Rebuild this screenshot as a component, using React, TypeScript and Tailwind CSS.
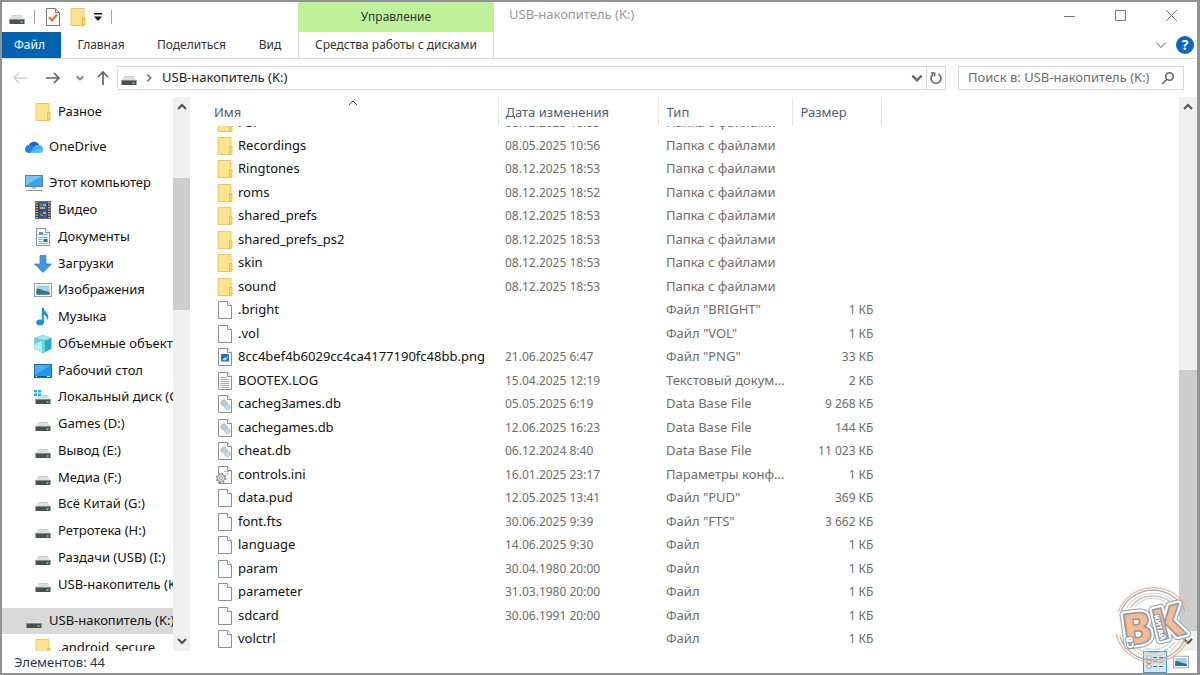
import type { ReactNode } from 'react'

type IconName =
  | 'folder' | 'file' | 'png' | 'log' | 'db' | 'ini'
  | 'onedrive' | 'pc' | 'video' | 'docs' | 'downloads' | 'pictures'
  | 'music' | 'objects' | 'desktop' | 'system' | 'drive'

type FileRow = {
  name: string
  icon: IconName
  date?: string
  type: string
  size?: string
}

type TreeItem = {
  name: string
  icon: IconName
}

const DIR = 'Папка с файлами'

const files: FileRow[] = [
  { name: 'Recordings', icon: 'folder', date: '08.05.2025 10:56', type: DIR },
  { name: 'Ringtones', icon: 'folder', date: '08.12.2025 18:53', type: DIR },
  { name: 'roms', icon: 'folder', date: '08.12.2025 18:52', type: DIR },
  { name: 'shared_prefs', icon: 'folder', date: '08.12.2025 18:53', type: DIR },
  { name: 'shared_prefs_ps2', icon: 'folder', date: '08.12.2025 18:53', type: DIR },
  { name: 'skin', icon: 'folder', date: '08.12.2025 18:53', type: DIR },
  { name: 'sound', icon: 'folder', date: '08.12.2025 18:53', type: DIR },
  { name: '.bright', icon: 'file', type: 'Файл "BRIGHT"', size: '1 КБ' },
  { name: '.vol', icon: 'file', type: 'Файл "VOL"', size: '1 КБ' },
  { name: '8cc4bef4b6029cc4ca4177190fc48bb.png', icon: 'png', date: '21.06.2025 6:47', type: 'Файл "PNG"', size: '33 КБ' },
  { name: 'BOOTEX.LOG', icon: 'log', date: '15.04.2025 12:19', type: 'Текстовый докум...', size: '2 КБ' },
  { name: 'cacheg3ames.db', icon: 'db', date: '05.05.2025 6:19', type: 'Data Base File', size: '9 268 КБ' },
  { name: 'cachegames.db', icon: 'db', date: '12.06.2025 16:23', type: 'Data Base File', size: '144 КБ' },
  { name: 'cheat.db', icon: 'db', date: '06.12.2024 8:40', type: 'Data Base File', size: '11 023 КБ' },
  { name: 'controls.ini', icon: 'ini', date: '16.01.2025 23:17', type: 'Параметры конф...', size: '1 КБ' },
  { name: 'data.pud', icon: 'file', date: '12.05.2025 13:41', type: 'Файл "PUD"', size: '369 КБ' },
  { name: 'font.fts', icon: 'file', date: '30.06.2025 9:39', type: 'Файл "FTS"', size: '3 662 КБ' },
  { name: 'language', icon: 'file', date: '14.06.2025 9:30', type: 'Файл', size: '1 КБ' },
  { name: 'param', icon: 'file', date: '30.04.1980 20:00', type: 'Файл', size: '1 КБ' },
  { name: 'parameter', icon: 'file', date: '31.03.1980 20:00', type: 'Файл', size: '1 КБ' },
  { name: 'sdcard', icon: 'file', date: '30.06.1991 20:00', type: 'Файл', size: '1 КБ' },
  { name: 'volctrl', icon: 'file', type: 'Файл', size: '1 КБ' },
]

const computer: TreeItem[] = [
  { name: 'Видео', icon: 'video' },
  { name: 'Документы', icon: 'docs' },
  { name: 'Загрузки', icon: 'downloads' },
  { name: 'Изображения', icon: 'pictures' },
  { name: 'Музыка', icon: 'music' },
  { name: 'Объемные объекты', icon: 'objects' },
  { name: 'Рабочий стол', icon: 'desktop' },
  { name: 'Локальный диск (C:)', icon: 'system' },
  { name: 'Games (D:)', icon: 'drive' },
  { name: 'Вывод (E:)', icon: 'drive' },
  { name: 'Медиа (F:)', icon: 'drive' },
  { name: 'Всё Китай (G:)', icon: 'drive' },
  { name: 'Ретротека (H:)', icon: 'drive' },
  { name: 'Раздачи (USB) (I:)', icon: 'drive' },
  { name: 'USB-накопитель (K:)', icon: 'drive' },
]

const driveShape = (
  <>
    <path d="M4.500 7h9l3 4.500h-15z" fill="#dcdfe1" />
    <path d="M4.500 7h9l.6 1H3.900z" fill="#c9cccf" />
    <rect x="1.500" y="11" width="15" height="5" rx=".6" fill="#4a4f52" />
    <path d="M1.500 11.500h15" stroke="#868b8f" />
    <rect x="12.500" y="13" width="2" height="2" fill="#35e03c" />
  </>
)

const pageShape = (
  <>
    <path d="M2.500.5h9l4 4v13h-13z" fill="#fafbfc" stroke="#8d8f91" />
    <path d="M11.500.5v4h4" fill="#fff" stroke="#8d8f91" />
  </>
)

const drawings: Record<IconName, ReactNode> = {
  folder: (
    <>
      <path d="M2 .5h13v17H2z" fill="#ffe48f" stroke="#efc75a" />
      <path d="M13.500 9.500h2.500v7.500l-2.500.5z" fill="#fbd767" stroke="#e9b93f" strokeWidth=".8" />
    </>
  ),
  file: pageShape,
  png: (
    <>
      {pageShape}
      <rect x="5" y="6" width="8" height="7.500" rx=".8" fill="#1f6fd0" />
      <path d="M6 12l3-3 1.500 1L12 7v2l-2 3.500z" fill="#a9d6fb" />
    </>
  ),
  log: (
    <>
      {pageShape}
      <path d="M4.500 5.500h6m-6 2h9m-9 2h9m-9 2h9m-9 2h9m-9 2h9" stroke="#a0a3a5" strokeWidth=".9" />
    </>
  ),
  db: (
    <>
      {pageShape}
      <circle cx="8" cy="8" r="3" fill="#dde2e6" stroke="#8f989f" strokeDasharray="1.300 .6" />
      <circle cx="8" cy="8" r="1.200" fill="#fff" stroke="#8f989f" strokeWidth=".8" />
      <circle cx="11.500" cy="12" r="2.600" fill="#c5dff0" stroke="#86b2d0" strokeDasharray="1.200 .5" />
    </>
  ),
  ini: (
    <>
      {pageShape}
      <path d="M8 5.500h5m-3 2.500h3" stroke="#b5b8ba" />
      <circle cx="5" cy="12" r="4.500" fill="#e5e7e8" stroke="#85898c" strokeWidth="1.600" strokeDasharray="1.900 1.630" />
      <circle cx="5" cy="12" r="3.500" fill="#e6e8ea" stroke="#85898c" strokeWidth=".8" />
      <circle cx="5" cy="12" r="1.400" fill="#fff" stroke="#85898c" strokeWidth=".8" />
    </>
  ),
  onedrive: (
    <>
      <path d="M4 7a5.500 5.500 0 0 1 10 0l-5 6H4z" fill="#1565d0" />
      <path d="M4 15a4 4 0 0 1-4-4c0-2.500 2-4.200 4.500-4C7 7.200 9 9 10 10l4 5z" fill="#1f84ea" />
      <path d="M8 10c2-3 5-4 7-2.500 2 .5 3 2 3 3.800A3.700 3.700 0 0 1 14.300 15H5z" fill="#3aaef5" />
      <path d="M5 15l4-2.500c3-2 7-2 9-1.200 0 2.200-1.700 3.700-3.700 3.700z" fill="#4fc4fb" />
    </>
  ),
  pc: (
    <>
      <rect x=".5" y="1.500" width="17" height="11" fill="#39a5ea" stroke="#5d7f98" />
      <path d="M1 2h16L1 11z" fill="#71c7f7" />
      <path d="M7 13h4v2H7z" fill="#b8c1c8" />
      <path d="M1 16.500h16" stroke="#8598a8" />
    </>
  ),
  video: (
    <>
      <rect x="1.500" y=".5" width="15" height="17" fill="#3c3c3c" stroke="#6a6a6a" />
      <path d="M3 1v16M15 1v16" stroke="#eee" strokeWidth="1.400" strokeDasharray="1.300 1.200" />
      <rect x="5" y="1" width="8" height="7.500" fill="#2465c5" />
      <rect x="5" y="9.500" width="8" height="7.500" fill="#1f58b4" />
      <path d="M9 3h3v2H9zM6 6h5v2H6zM9 11h3v2H9z" fill="#e8a52a" />
      <path d="M6 3h2v2H6zM6 13h3v2H6z" fill="#44a750" />
      <path d="M10 14h3v2h-3z" fill="#c63d3a" />
    </>
  ),
  docs: (
    <>
      {pageShape}
      <path d="M5 4h4v3H5z" fill="#3d9fdf" />
      <path d="M4.500 9.500h9m-9 2h4m-4 2h4m-4 2h9M10 6.500h3.500" stroke="#6fa9cf" />
      <rect x="9.500" y="11" width="4" height="3" fill="#48636f" />
    </>
  ),
  downloads: <path d="M6 .5h6v8.500h5.500L9 17.500.5 9H6z" fill="#3b97e3" stroke="#2b80cb" strokeWidth=".7" />,
  pictures: (
    <>
      <rect x=".5" y="2.500" width="17" height="13" fill="#fff" stroke="#999da0" />
      <rect x="2.500" y="4.500" width="13" height="9" fill="#9fd3f3" />
      <path d="M2.500 8c4-1 5 2 13 3v2.500h-13z" fill="#3f7669" />
      <path d="M2.500 11.500h13v2h-13z" fill="#2c6fb0" />
    </>
  ),
  music: (
    <>
      <ellipse cx="6" cy="14.500" rx="3.800" ry="3" fill="#1592ee" />
      <path d="M7.800 0h2c.2 4 5 4.500 4.500 10-.5 1-1 1.500-1.500 2 .5-3-1-5-3-5.500v8H7.800z" fill="#1592ee" />
    </>
  ),
  objects: (
    <>
      <path d="M9 0l8.500 3v11L9 18 .5 14V3z" fill="#2aa9c4" />
      <path d="M9 0l8.500 3L11 5.500.5 3z" fill="#9fe9ee" />
      <path d="M.5 3L11 5.500V17L9 18 .5 14z" fill="#66d3de" />
      <path d="M.5 9L8 6v11.500L.5 14z" fill="#b6f1f2" />
    </>
  ),
  desktop: (
    <>
      <rect x=".5" y="2.500" width="17" height="13" fill="#2196ef" stroke="#1f6cad" />
      <path d="M1 3h16L1 13z" fill="#47aef6" />
      <path d="M1 14.500h16" stroke="#12517f" />
      <path d="M2 14.500h1m10 0h3" stroke="#fff" />
    </>
  ),
  system: (
    <>
      {driveShape}
      <path d="M0 2h3v2.500H0zM4 2h3v2.500H4zM0 5.500h3V8H0zM4 5.500h3V8H4z" fill="#22b0ef" />
    </>
  ),
  drive: driveShape,
}

const Icon = ({ name, className = 'size-[18px]' }: { name: IconName; className?: string }) => (
  <svg viewBox="0 0 18 18" fill="none" className={`${className} shrink-0 overflow-visible`} aria-hidden="true">
    {drawings[name]}
  </svg>
)

const Chevron = ({ d, className }: { d: 'up' | 'down' | 'right'; className: string }) => {
  const paths = { up: 'M2 8l4-4 4 4', down: 'M2 4l4 4 4-4', right: 'M4 2l4 4-4 4' }
  return (
    <svg viewBox="0 0 12 12" fill="none" stroke="currentColor" className={`${className} shrink-0`} aria-hidden="true">
      <path d={paths[d]} />
    </svg>
  )
}

const TitleBar = () => (
  <header className="flex border-b border-[#dadbdc]">
    <div className="flex w-[296px] flex-col">
      <div className="flex h-[30px] items-center pl-1.5">
        <Icon name="drive" />
        <span className="ml-2 h-3.5 w-px bg-gray-400" />
        <button aria-label="Свойства" className="ml-2.5">
          <svg viewBox="0 0 16 18" fill="none" className="h-[18px] w-4">
            <path d="M1.500.5h9l4 4v13h-13z" fill="#fff" stroke="#77797b" />
            <path d="M10.500.5v4h4" stroke="#77797b" />
            <path d="M4 9l3 3.500L12 6.500" stroke="#f0672a" strokeWidth="2" />
          </svg>
        </button>
        <button aria-label="Новая папка" className="ml-2">
          <Icon name="folder" />
        </button>
        <button aria-label="Настройка панели быстрого доступа" className="ml-1.5">
          <svg viewBox="0 0 10 8" className="h-2 w-2.5">
            <path d="M1 0h8v1.500H1zM1 3.500h8L5 8z" fill="#111" />
          </svg>
        </button>
        <span className="ml-2 h-3.5 w-px bg-gray-400" />
      </div>
      <nav className="flex h-[26px] text-xs text-[#333]">
        <button className="w-[59px] bg-[#0063b1] pr-1 text-white">Файл</button>
        <button className="w-20">Главная</button>
        <button className="w-[101px]">Поделиться</button>
        <button className="w-14">Вид</button>
      </nav>
    </div>
    <div className="flex w-[196px] flex-col text-xs text-[#333]">
      <div className="flex h-[30px] items-center justify-center bg-[#bff09a]">Управление</div>
      <button className="h-[26px] border-x border-[#dadbdc] whitespace-nowrap">Средства работы с дисками</button>
    </div>
    <div className="flex flex-1 flex-col">
      <div className="flex h-[30px] items-center justify-between pr-[19px] pb-1">
        <h1 className="pl-[15px] text-[13px] text-[#999]">USB-накопитель (K:)</h1>
        <div className="flex items-center gap-[38px] text-[#777]">
          <button aria-label="Свернуть">
            <svg viewBox="0 0 13 13" fill="none" stroke="currentColor" className="size-[13px]"><path d="M1 7.500h11" /></svg>
          </button>
          <button aria-label="Развернуть">
            <svg viewBox="0 0 13 13" fill="none" stroke="currentColor" className="size-[13px]"><path d="M1.500 1.500h10v10h-10z" /></svg>
          </button>
          <button aria-label="Закрыть">
            <svg viewBox="0 0 13 13" fill="none" stroke="currentColor" className="size-[13px]"><path d="M1 1l11 11M12 1L1 12" /></svg>
          </button>
        </div>
      </div>
      <div className="flex h-[26px] items-center justify-end gap-2 pr-[3px]">
        <button aria-label="Развернуть ленту" className="text-[#999]"><Chevron d="down" className="size-3.5" /></button>
        <button className="flex size-[18px] items-center justify-center rounded-full bg-[#0a66c8] text-sm font-bold text-white">?</button>
      </div>
    </div>
  </header>
)

const AddressBar = () => (
  <div className="flex h-[38px] items-center pr-[13px]">
    <div className="flex w-[115px] items-center pl-2.5">
      <button aria-label="Назад" className="text-[#d0d0d0]">
        <svg viewBox="0 0 16 16" fill="none" stroke="currentColor" strokeWidth="1.500" className="size-4"><path d="M15 8H2m5-5L2 8l5 5" /></svg>
      </button>
      <button aria-label="Вперёд" className="ml-[17px] text-[#666]">
        <svg viewBox="0 0 16 16" fill="none" stroke="currentColor" strokeWidth="1.700" className="size-4"><path d="M1 8h13M9 3l5 5-5 5" /></svg>
      </button>
      <button aria-label="Последние расположения" className="ml-3.5 text-[#777]">
        <Chevron d="down" className="size-2.5 stroke-2" />
      </button>
      <button aria-label="Вверх" className="ml-2.5 text-[#666]">
        <svg viewBox="0 0 16 16" fill="none" stroke="currentColor" strokeWidth="1.700" className="size-4"><path d="M8 15V2M3 7l5-5 5 5" /></svg>
      </button>
    </div>
    <div className="flex h-6 flex-1 items-center border border-[#d9d9d9] pl-0.5 text-[13px] text-[#222]">
      <Icon name="drive" />
      <Chevron d="right" className="mr-2 ml-1.5 size-2.5 stroke-2 text-[#777]" />
      <span className="flex-1">USB-накопитель (K:)</span>
      <button aria-label="Предыдущие расположения" className="mr-0.5 text-[#666]"><Chevron d="down" className="size-3.5 stroke-2" /></button>
      <button aria-label="Обновить" className="flex h-full w-[19px] items-center justify-center border-l border-[#d9d9d9] text-[#666]">
        <svg viewBox="0 0 14 14" fill="none" stroke="currentColor" strokeWidth="1.600" className="size-3.5">
          <path d="M9.500 3a5 5 0 1 1-5.500.3" />
          <path d="M2 2h3.500v3.500" />
        </svg>
      </button>
    </div>
    <label className="ml-3 flex h-6 w-[226px] items-center border border-[#d9d9d9] pr-2 pl-[9px] text-[#666]">
      <input
        type="text"
        aria-label="Поиск"
        placeholder="Поиск в: USB-накопитель (K:)"
        className="w-full min-w-0 flex-1 text-[13px] outline-none placeholder:text-[#6d6d6d]"
      />
      <svg viewBox="0 0 14 14" fill="none" stroke="currentColor" strokeWidth="1.600" className="size-3.5 shrink-0">
        <circle cx="8.500" cy="5.500" r="3.800" />
        <path d="M5.800 8.200L1 13" />
      </svg>
    </label>
  </div>
)

const Sidebar = () => (
  <aside className="flex w-[188px] overflow-hidden">
    <nav className="w-[171px] overflow-hidden text-[13px] whitespace-nowrap text-[#111]">
      <a href="#" className="flex h-[29px] items-center gap-1.5 pl-8"><Icon name="folder" />Разное</a>
      <a href="#" className="mt-2 flex h-[26px] items-center gap-1.5 pl-[23px]"><Icon name="onedrive" />OneDrive</a>
      <a href="#" className="mt-2.5 flex h-[26px] items-center gap-1.5 pl-[23px]"><Icon name="pc" />Этот компьютер</a>
      <ul>
        {computer.map((item) => (
          <li key={item.name} className="h-[27px] nth-[4n]:h-[26px]">
            <a href="#" className="flex h-full items-center gap-1.5 pl-8"><Icon name={item.icon} />{item.name}</a>
          </li>
        ))}
      </ul>
      <a href="#" className="mt-2.5 flex h-[26px] items-center gap-1.5 bg-[#d9d9d9] pl-[23px]"><Icon name="drive" />USB-накопитель (K:)</a>
      <a href="#" className="flex h-[27px] items-center gap-1.5 pl-8"><Icon name="folder" />.android_secure</a>
    </nav>
    <div className="flex w-[17px] flex-col items-center bg-[#f0f0f0] text-[#505050]">
      <button aria-label="Вверх" className="flex h-5 items-center"><Chevron d="up" className="size-3 stroke-2" /></button>
      <div className="mt-[61px] h-[132px] w-full bg-[#cdcdcd]" />
      <button aria-label="Вниз" className="mt-auto flex h-5 items-center"><Chevron d="down" className="size-3 stroke-2" /></button>
    </div>
  </aside>
)

const NameCell = ({ icon, name }: { icon: IconName; name: string }) => (
  <span className="flex items-center gap-1 text-[13px] text-[#111]">
    <Icon name={icon} />
    {name}
  </span>
)

const FileTable = () => (
  <div className="flex-1 overflow-hidden pl-6">
    <table className="w-[668px] table-fixed whitespace-nowrap">
      <thead className="text-left text-[13px] text-[#4c607a]">
        <tr className="h-[29px]">
          <th className="relative w-[284px] border-r border-[#e5e5e5] pt-0.5 font-normal">
            Имя
            <span className="absolute top-0 left-[133px]"><Chevron d="up" className="size-3 text-[#555]" /></span>
          </th>
          <th className="w-40 border-r border-[#e5e5e5] pt-0.5 pl-[7px] font-normal">Дата изменения</th>
          <th className="w-[134px] border-r border-[#e5e5e5] pt-0.5 pl-2 font-normal">Тип</th>
          <th className="border-r border-[#e5e5e5] pt-0.5 pl-2 font-normal">Размер</th>
        </tr>
      </thead>
      <tbody className="text-[13px] text-[#6d6d6d]">
        {/* row scrolled half under the header */}
        <tr className="h-2">
          <td><div className="flex h-2 items-end overflow-hidden pl-0.5"><div className="flex h-[23px] items-center"><NameCell icon="folder" name="PSP" /></div></div></td>
          <td><div className="flex h-2 items-end overflow-hidden pl-[7px] text-xs"><span className="h-[23px] leading-[23px]">08.12.2025 18:53</span></div></td>
          <td><div className="flex h-2 items-end overflow-hidden pl-2"><span className="h-[23px] leading-[23px]">{DIR}</span></div></td>
          <td />
        </tr>
        {files.map((file) => (
          <tr key={file.name} className="h-[23px] odd:h-6">
            <td className="pl-0.5"><NameCell icon={file.icon} name={file.name} /></td>
            <td className="pl-[7px] text-xs">{file.date}</td>
            <td className="pl-2">{file.type}</td>
            <td className="pr-2 text-right text-xs">{file.size}</td>
          </tr>
        ))}
      </tbody>
    </table>
  </div>
)

const Watermark = () => (
  <svg viewBox="0 0 80 80" fill="none" className="pointer-events-none absolute right-1 bottom-2 size-20" aria-hidden="true">
    <g strokeWidth="1.200">
      <path d="M5 27A38 38 0 0 1 76 27M3 49A38 38 0 0 0 74 56" stroke="#f6b48a" />
      <path d="M8 26A35 35 0 0 1 72 26M7 52A35 35 0 0 0 72 54" stroke="#a3abb3" />
      <path d="M13 24A31 31 0 0 1 67 24M12 54A31 31 0 0 0 67 55" stroke="#f8cbb0" />
      <path d="M17 23A28 28 0 0 1 63 23M17 56A28 28 0 0 0 62 57" stroke="#b9c0c6" />
      <path d="M22 22A23 23 0 0 1 58 22M23 57A23 23 0 0 0 57 57" stroke="#d5d9dc" />
    </g>
    <g fontFamily="Open Sans, sans-serif" fontWeight="800" fontSize="44" textAnchor="middle" strokeLinejoin="round">
      <g transform="translate(24 44) rotate(-8)">
        <text y="15" stroke="#8d99a5" strokeWidth="8">В</text>
        <text y="15" stroke="#fff" strokeWidth="6">В</text>
        <text y="15" fill="#f8b890" stroke="#8d99a5" strokeWidth="1.500">В</text>
      </g>
      <g transform="translate(55 38) rotate(-14)">
        <text y="15" stroke="#8d99a5" strokeWidth="8">К</text>
        <text y="15" stroke="#fff" strokeWidth="6">К</text>
        <text y="15" fill="#f8b890" stroke="#8d99a5" strokeWidth="1.500">К</text>
      </g>
    </g>
    <g
      fontFamily="Open Sans, sans-serif"
      fontWeight="800"
      fontSize="9"
      textAnchor="middle"
      fill="#fff"
      stroke="#8d99a5"
      strokeWidth="2"
      paintOrder="stroke"
    >
      <text transform="translate(20 57) rotate(-100)">СВ</text>
      <text transform="translate(44 43) rotate(76)" fontSize="7">КИТАЙ</text>
    </g>
  </svg>
)

const App = () => (
  <div className="relative flex h-screen w-full flex-col overflow-hidden border-2 border-r-[3px] border-[#929292] bg-white font-['Noto_Sans',sans-serif]">
    <TitleBar />
    <AddressBar />
    <main className="flex min-h-0 flex-1">
      <Sidebar />
      <FileTable />
      <div className="flex w-[18px] flex-col items-center bg-[#f0f0f0] text-[#505050]">
        <button aria-label="Вверх" className="flex h-5 items-center"><Chevron d="up" className="size-3 stroke-2" /></button>
        <div className="mt-auto h-[261px] w-full bg-[#cdcdcd]" />
        <button aria-label="Вниз" className="flex h-5 items-center"><Chevron d="down" className="size-3 stroke-2" /></button>
      </div>
    </main>
    <footer className="flex h-[22px] items-center justify-between pl-3 text-[13px] text-[#1e395b]">
      <span className="pt-0.5">Элементов: 44</span>
      <div className="flex h-full items-center pr-2">
        <button aria-label="Таблица" className="flex h-full w-6 items-center justify-center border border-[#26a0da] bg-[#cbe8f6]">
          <svg viewBox="0 0 18 14" className="h-3.5 w-[18px]">
            <path d="M1 1h4v3H1zM1 5.500h4v3H1zM1 10h4v3H1z" fill="#fff" stroke="#8a8a8a" strokeWidth=".8" />
            <path d="M7 2.500h4m2 0h4M7 7h4m2 0h4M7 11.500h4m2 0h4" stroke="#666" />
          </svg>
        </button>
        <button aria-label="Крупные значки" className="ml-1.5"><Icon name="pictures" className="size-4" /></button>
      </div>
    </footer>
    <Watermark />
  </div>
)

export default App
